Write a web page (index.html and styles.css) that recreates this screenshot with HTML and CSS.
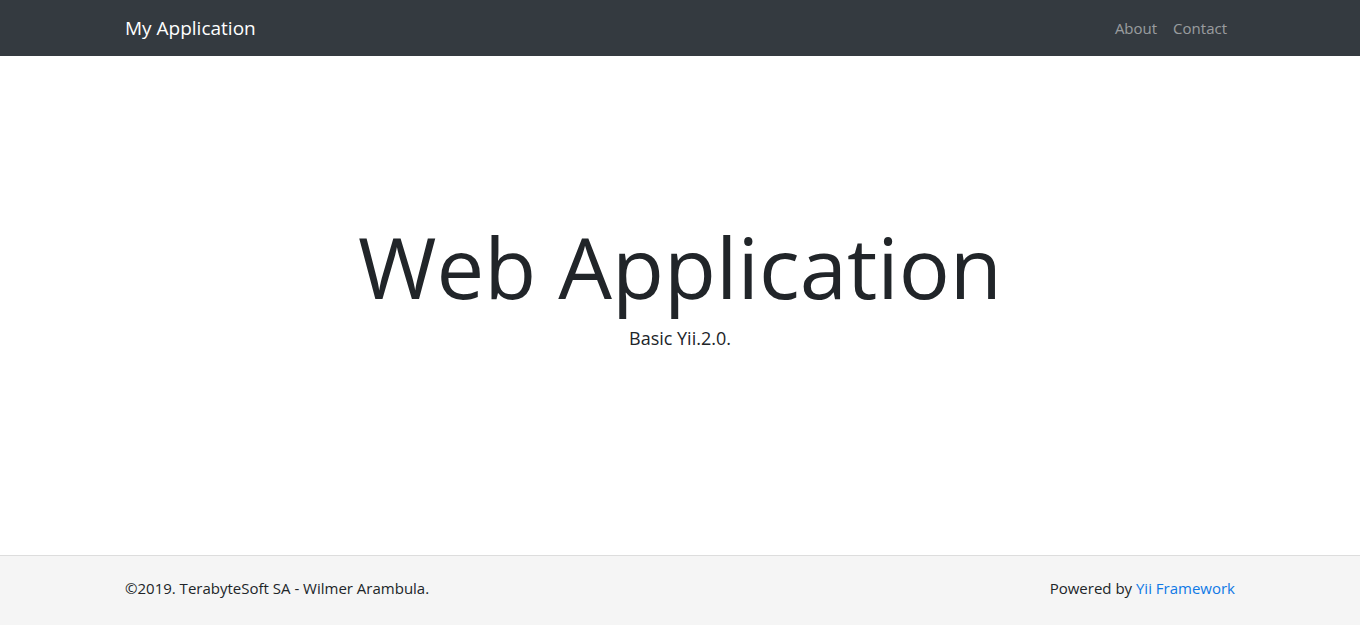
FILE: index.html
```html
<!DOCTYPE html>
<html lang="en">
<head>
<meta charset="utf-8">
<meta name="viewport" content="width=device-width, initial-scale=1">
<title>My Application</title>
<link rel="stylesheet" href="styles.css">
</head>
<body>
<header class="navbar">
  <div class="container">
    <a class="brand" href="#">My Application</a>
    <nav class="nav">
      <a class="nav-link" href="#about">About</a>
      <a class="nav-link" href="#contact">Contact</a>
    </nav>
  </div>
</header>
<main class="hero">
  <h1 class="title">Web Application</h1>
  <p class="subtitle">Basic Yii.2.0.</p>
</main>
<footer class="footer">
  <div class="container">
    <p class="footer-text">©2019. TerabyteSoft SA - Wilmer Arambula.</p>
    <p class="footer-text">Powered by <a class="link" href="#yii">Yii Framework</a></p>
  </div>
</footer>
</body>
</html>
```
FILE: styles.css
```css
* { box-sizing: border-box; }
body {
  margin: 0;
  min-height: 100vh;
  display: flex;
  flex-direction: column;
  font-family: "Segoe UI", "Open Sans", "Noto Sans", sans-serif;
  font-size: 15px;
  line-height: 24px;
  color: #212529;
  background: #fff;
}
a { text-decoration: none; }
.container {
  width: 100%;
  max-width: 1140px;
  margin: 0 auto;
  padding: 0 15px;
  display: flex;
  align-items: center;
  justify-content: space-between;
}
.navbar { padding: 8px 0; background: #343a40; }
.brand { font-size: 19px; line-height: 40px; color: #fff; }
.nav { display: flex; }
.nav-link { padding: 8px; color: rgba(255, 255, 255, 0.5); }
.hero {
  flex: 1;
  display: flex;
  flex-direction: column;
  align-items: center;
  justify-content: center;
  padding-bottom: 48px;
  text-align: center;
}
.title { margin: 0; font-size: 85px; font-weight: 400; line-height: 112px; }
.subtitle { margin: 0; font-size: 18px; line-height: 32px; }
.footer { padding: 20px 0 25px; background: #f5f5f5; border-top: 1px solid #ddd; }
.footer-text { margin: 0; }
.link { color: #0f79e6; }
```
